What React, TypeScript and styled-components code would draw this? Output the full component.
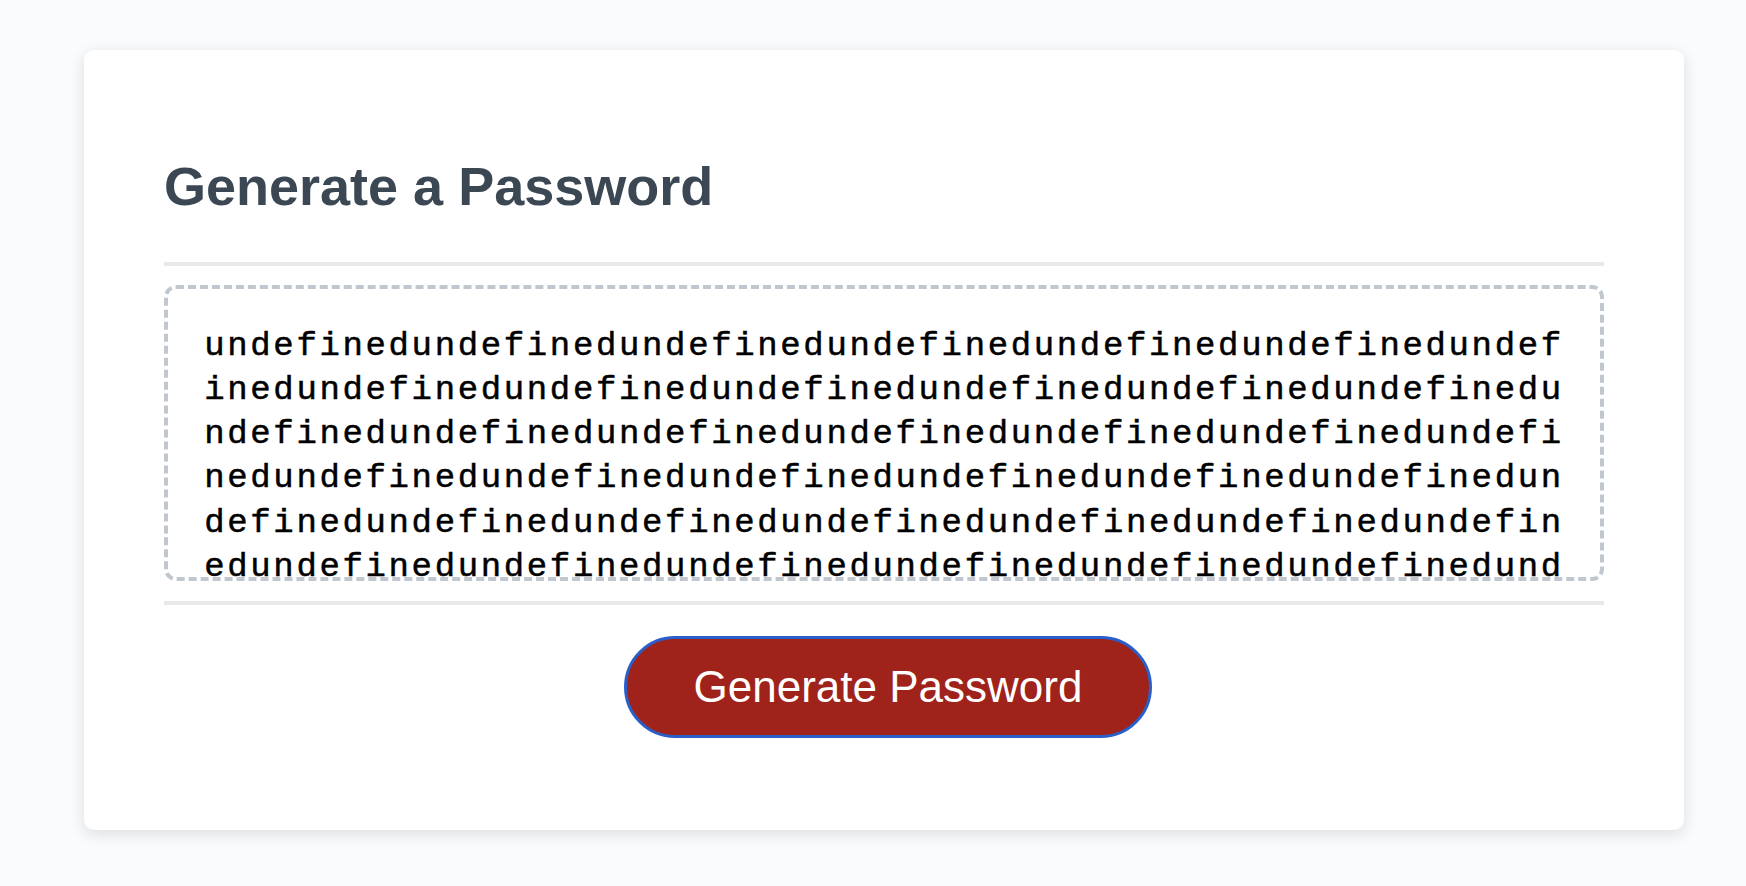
import React from "react";
import styled, { createGlobalStyle } from "styled-components";

const GlobalStyle = createGlobalStyle`
  html, body {
    margin: 0;
    padding: 0;
    background: #f9fbfd;
    font-family: "Liberation Sans", Arial, Helvetica, sans-serif;
  }
`;

const Wrapper = styled.div`
  padding: 50px 62px 56px 84px;
`;

const Card = styled.section`
  background: #ffffff;
  border-radius: 10px;
  box-shadow: rgba(0, 0, 0, 0.12) 0 4px 16px 0;
  color: #3b4854;
  font-size: 36px;
  width: 1600px;
  box-sizing: border-box;
  padding: 60px 80px;
`;

const Divider = styled.div`
  height: 4px;
  width: 100%;
  background: #e7e9eb;
`;

const Header = styled.header`
  display: flex;
  flex-direction: column;
`;

const Title = styled.h2`
  font-family: "Liberation Sans", Arial, Helvetica, sans-serif;
  font-weight: 700;
  font-size: 54px;
  line-height: normal;
  margin: 44.8px 0;
  color: #3b4854;
`;

const Body = styled.div`
  min-height: 200px;
`;

const PasswordArea = styled.textarea`
  appearance: none;
  display: block;
  box-sizing: border-box;
  width: 100%;
  height: 296px;
  margin: 19px 0 20px;
  padding: 35px 30px 170px;
  border: 4px dashed #c0c7cf;
  border-radius: 12px;
  resize: none;
  overflow: hidden;
  text-align: center;
  font-family: "Liberation Mono", "Courier New", monospace;
  font-size: 34px;
  font-weight: 400;
  -webkit-text-stroke: 0.5px #000000;
  letter-spacing: 2.64px;
  line-height: 44.3px;
  color: #000000;
  background: #ffffff;
  outline: none;
`;

const Footer = styled.footer`
  text-align: center;
`;

const GenerateButton = styled.button`
  display: inline-block;
  box-sizing: border-box;
  margin: 31px 32px 32px 40px;
  padding: 26px 67px;
  border: 3px solid #2a5fca;
  border-radius: 52px;
  background: #9f231b;
  color: #ffffff;
  font-family: "Liberation Sans", Arial, Helvetica, sans-serif;
  font-size: 44px;
  line-height: 44px;
  cursor: pointer;
`;

export default function App() {
  const value = "undefined".repeat(64);
  return (
    <>
      <GlobalStyle />
      <Wrapper>
        <Card>
          <Header>
            <Title>Generate a Password</Title>
            <Divider />
          </Header>
          <Body>
            <PasswordArea
              readOnly
              value={value}
              placeholder="Your Secure Password"
              aria-label="Generated Password"
            />
          </Body>
          <Footer>
            <Divider />
            <GenerateButton type="button">Generate Password</GenerateButton>
          </Footer>
        </Card>
      </Wrapper>
    </>
  );
}
